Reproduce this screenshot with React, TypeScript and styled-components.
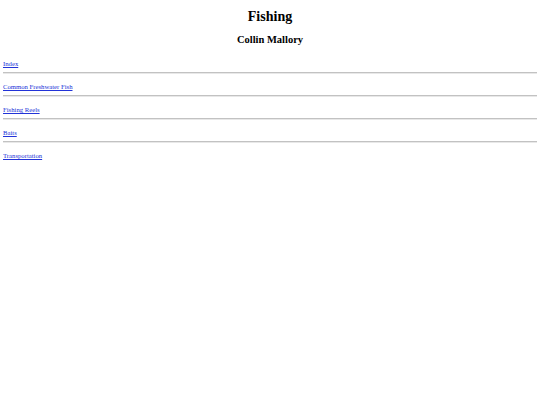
import React from 'react';
import styled, { createGlobalStyle } from 'styled-components';

const GlobalStyle = createGlobalStyle`
  html, body {
    background: #ffffff;
  }
  body {
    margin: 3px;
    font-family: "Liberation Serif", "Times New Roman", serif;
    font-size: 6.7px;
    color: #000;
  }
`;

const Title = styled.h1`
  font-size: 14px;
  font-weight: bold;
  text-align: center;
  margin: 6px 0 9px;
`;

const Author = styled.h2`
  font-size: 10.5px;
  font-weight: bold;
  text-align: center;
  margin: 9px 0 15px;
`;

const Nav = styled.nav`
  display: block;
`;

const Item = styled.p`
  margin: 9px 0 5px;
`;

const Link = styled.a`
  color: #2233d8;
  text-decoration: underline;
`;

const Rule = styled.hr`
  margin: 0;
  border: 0;
  border-top: 1px solid #c2c2c2;
  border-bottom: 1px solid #e8e8e8;
`;

const PAGES = ['Index', 'Common Freshwater Fish', 'Fishing Reels', 'Baits', 'Transportation'];

const App: React.FC = () => (
  <>
    <GlobalStyle />
    <Title>Fishing</Title>
    <Author>Collin Mallory</Author>
    <Nav>
      {PAGES.map((page, i) => (
        <React.Fragment key={page}>
          <Item>
            <Link href="#">{page}</Link>
          </Item>
          {i < PAGES.length - 1 && <Rule />}
        </React.Fragment>
      ))}
    </Nav>
  </>
);

export default App;
